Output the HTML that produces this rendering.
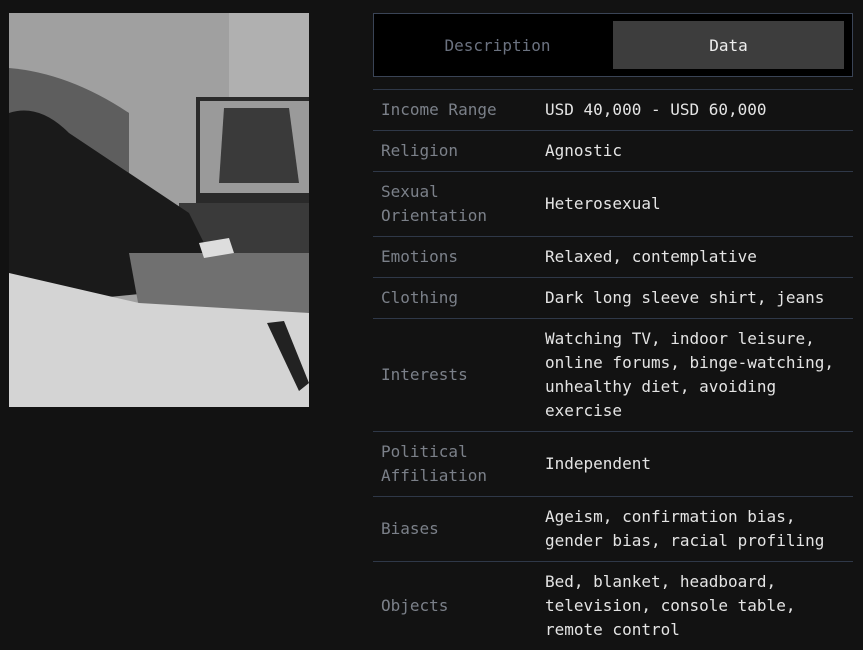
<!DOCTYPE html>
<html><head><meta charset="utf-8"><style>
*{margin:0;padding:0;box-sizing:border-box}
html,body{width:863px;height:615px;overflow:hidden;background:#121212;font-family:"DejaVu Sans Mono","Liberation Mono",monospace;font-size:16px}
.img{position:absolute;left:9px;top:13px;width:300px;height:394px}
.tabs{position:absolute;left:373px;top:13px;width:480px;height:64px;background:#000;border:1px solid #3a4456}
.t1{position:absolute;left:4px;top:1px;width:239px;height:62px;line-height:62px;text-align:center;color:#6b7280}
.t2{position:absolute;left:239px;top:7px;width:231px;height:48px;line-height:50px;text-align:center;color:#eee;background:#3d3d3d}
table{position:absolute;left:373px;top:89px;width:480px;border-collapse:collapse}
td{border-top:1px solid #2f3848;padding:8px;line-height:24px;vertical-align:middle}
td.l{color:#7b8089;width:163px}
td.v{color:#e4e4e4;padding-left:9px;padding-right:0}
</style></head><body>
<svg class="img" viewBox="0 0 300 394" preserveAspectRatio="none">
<rect width="300" height="394" fill="#a0a0a0"/>
<rect x="220" width="80" height="120" fill="#b0b0b0"/>
<path d="M0 55 Q60 60 120 100 L120 190 L0 190Z" fill="#5e5e5e"/>
<rect x="187" y="84" width="113" height="120" fill="#2a2a2a"/>
<rect x="191" y="88" width="109" height="92" fill="#9a9a9a"/>
<path d="M215 95 L280 95 L290 170 L210 170Z" fill="#3a3a3a"/>
<rect x="170" y="190" width="130" height="50" fill="#3a3a3a"/>
<path d="M0 100 Q30 90 60 120 L180 200 L200 240 L190 275 L90 285 L0 280Z" fill="#1a1a1a"/>
<path d="M120 240 L300 240 L300 300 L130 295Z" fill="#707070"/>
<path d="M0 260 L130 290 L300 300 L300 394 L0 394Z" fill="#d4d4d4"/>
<path d="M258 310 L275 308 L300 370 L290 378Z" fill="#222"/>
<path d="M190 230 L220 225 L225 240 L195 245Z" fill="#ddd"/>
</svg>
<div class="tabs"><div class="t1">Description</div><div class="t2">Data</div></div>
<table>
<tr><td class="l">Income Range</td><td class="v">USD 40,000 - USD 60,000</td></tr>
<tr><td class="l">Religion</td><td class="v">Agnostic</td></tr>
<tr><td class="l">Sexual Orientation</td><td class="v">Heterosexual</td></tr>
<tr><td class="l">Emotions</td><td class="v">Relaxed, contemplative</td></tr>
<tr><td class="l">Clothing</td><td class="v">Dark long sleeve shirt, jeans</td></tr>
<tr><td class="l">Interests</td><td class="v">Watching TV, indoor leisure, online forums, binge-watching, unhealthy diet, avoiding exercise</td></tr>
<tr><td class="l">Political Affiliation</td><td class="v">Independent</td></tr>
<tr><td class="l">Biases</td><td class="v">Ageism, confirmation bias, gender bias, racial profiling</td></tr>
<tr><td class="l">Objects</td><td class="v">Bed, blanket, headboard, television, console table, remote control</td></tr>
</table>
</body></html>
